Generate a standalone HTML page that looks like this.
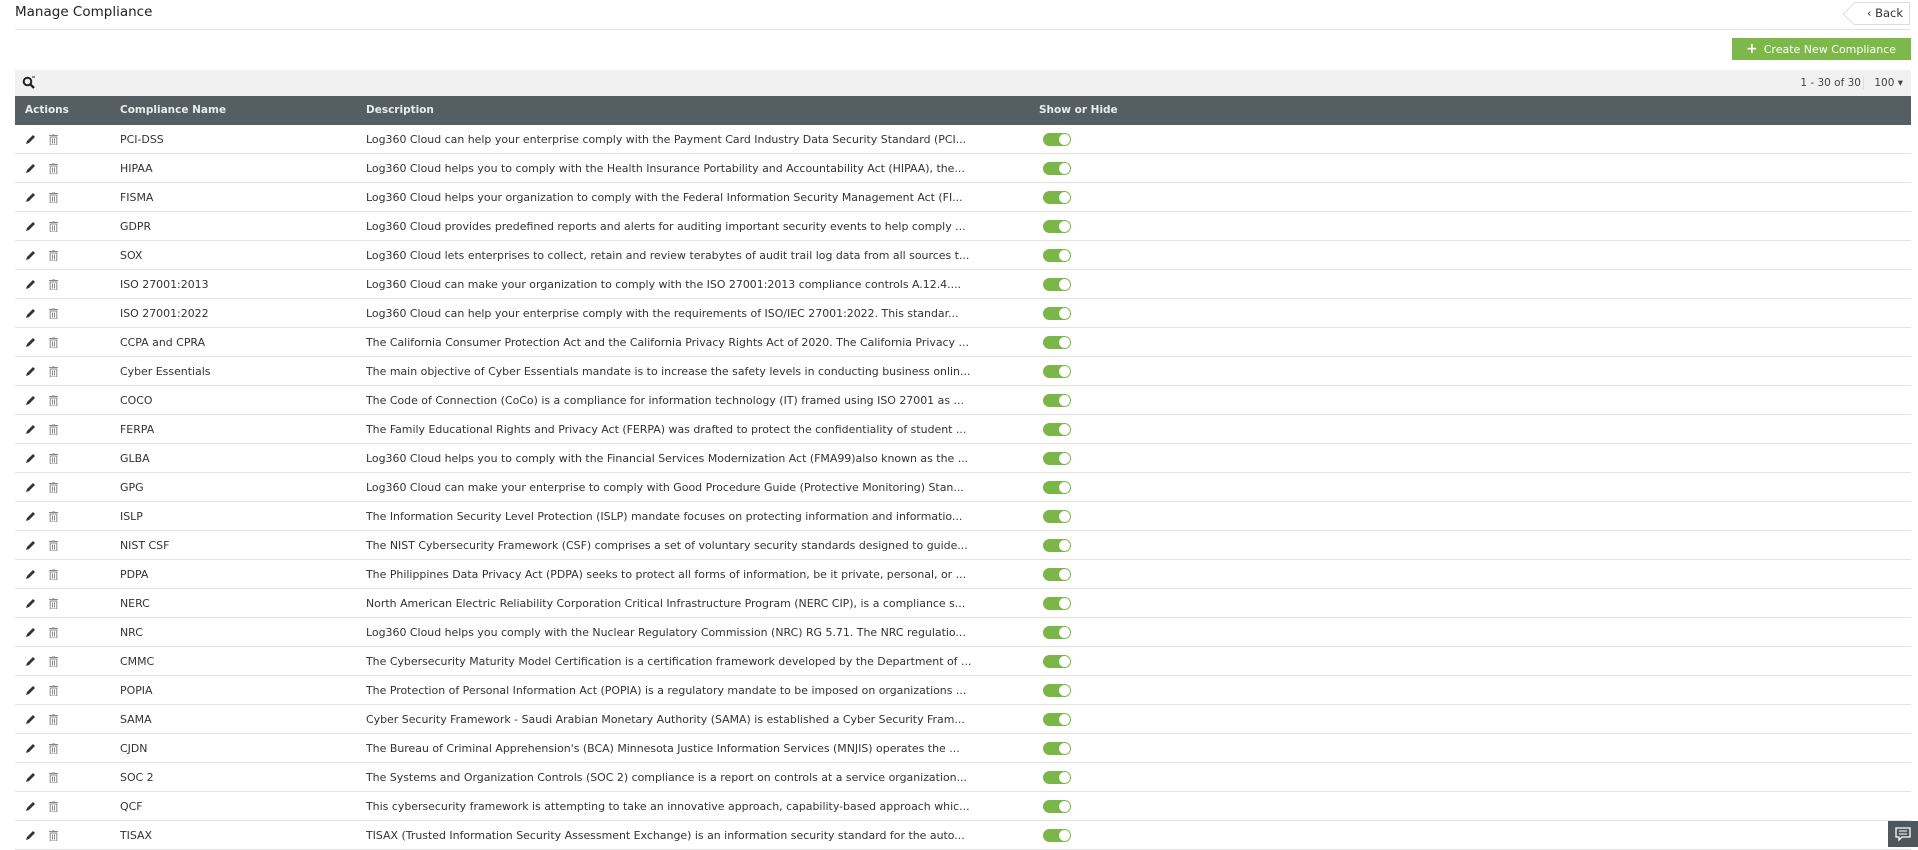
<!DOCTYPE html>
<html><head><meta charset="utf-8"><style>
*{box-sizing:border-box;margin:0;padding:0}
body{width:1918px;height:847px;overflow:hidden;background:#fff;font-family:"DejaVu Sans","Liberation Sans",sans-serif;color:#333;position:relative}
.title{position:absolute;left:15px;top:4px;font-size:13.5px;color:#222}
.hr{position:absolute;left:15px;right:8px;top:29px;height:1px;background:#e3e3e3}
.back{position:absolute;right:8px;top:2px;width:56px;height:23px;border:1px solid #ddd;border-left:none;font-size:11.5px;line-height:21px;text-align:right;padding-right:6px;background:#fff}
.back:before{content:"";position:absolute;left:-8px;top:3px;width:15px;height:15px;border-left:1px solid #ddd;border-bottom:1px solid #ddd;transform:rotate(45deg);background:#fff}
.back span{position:relative}
.btn{position:absolute;left:1732px;top:38px;width:179px;height:22px;background:#7cb94a;color:#fff;font-size:11px;line-height:22px;padding-left:14px}
.btn b{font-size:14px;margin-right:6px}
.bar{position:absolute;left:15px;width:1896px;top:70px;height:26px;background:#f1f1f1}
.pg{position:absolute;right:50px;top:7px;font-size:10.5px;color:#444}
.pp{position:absolute;right:8px;top:7px;font-size:10.5px;color:#444;border-left:1px solid #ddd;padding-left:10px}
.thead{position:absolute;left:15px;width:1896px;top:96px;height:29px;background:#545e63;color:#e8ecee;font-size:10.5px;font-weight:bold}
.thead div,.row div{position:absolute;top:0;line-height:29px;white-space:nowrap}
.row{position:absolute;left:15px;width:1896px;height:29px;border-bottom:1px solid #e3e3e3;font-size:10.95px;color:#333}
.c1{left:10px}.c2{left:105px}.c3{left:351px;width:640px;overflow:hidden}.c4{left:1024px}
.tg{position:absolute;left:1028px;top:8px;width:28px;height:13px;border-radius:7px;background:#7ab648}
.tg:after{content:"";position:absolute;right:1px;top:1px;width:11px;height:11px;border-radius:50%;background:#fff}
.chat{position:absolute;left:1888px;top:821px;width:30px;height:26px;background:#4e575c}
</style></head><body>
<div class="title">Manage Compliance</div>
<div class="back"><span>‹ Back</span></div>
<div class="hr"></div>
<div class="btn"><b>+</b>Create New Compliance</div>
<div class="bar"><svg style="position:absolute;left:7px;top:6px" width="14" height="14" viewBox="0 0 14 14"><circle cx="5.5" cy="5.5" r="3.8" fill="none" stroke="#222" stroke-width="2"/><path d="M8.3 8.3L12 12" stroke="#222" stroke-width="2.4"/><path d="M10 1h3" stroke="#222" stroke-width="1"/></svg><div class="pg">1 - 30 of 30</div><div class="pp">100 ▾</div></div>
<div class="thead"><div class="c1">Actions</div><div class="c2">Compliance Name</div><div class="c3">Description</div><div class="c4">Show or Hide</div></div>
<div id="rows"></div>
<script>
const d=[["PCI-DSS","Log360 Cloud can help your enterprise comply with the Payment Card Industry Data Security Standard (PCI..."],
["HIPAA","Log360 Cloud helps you to comply with the Health Insurance Portability and Accountability Act (HIPAA), the..."],
["FISMA","Log360 Cloud helps your organization to comply with the Federal Information Security Management Act (FI..."],
["GDPR","Log360 Cloud provides predefined reports and alerts for auditing important security events to help comply ..."],
["SOX","Log360 Cloud lets enterprises to collect, retain and review terabytes of audit trail log data from all sources t..."],
["ISO 27001:2013","Log360 Cloud can make your organization to comply with the ISO 27001:2013 compliance controls A.12.4...."],
["ISO 27001:2022","Log360 Cloud can help your enterprise comply with the requirements of ISO/IEC 27001:2022. This standar..."],
["CCPA and CPRA","The California Consumer Protection Act and the California Privacy Rights Act of 2020. The California Privacy ..."],
["Cyber Essentials","The main objective of Cyber Essentials mandate is to increase the safety levels in conducting business onlin..."],
["COCO","The Code of Connection (CoCo) is a compliance for information technology (IT) framed using ISO 27001 as ..."],
["FERPA","The Family Educational Rights and Privacy Act (FERPA) was drafted to protect the confidentiality of student ..."],
["GLBA","Log360 Cloud helps you to comply with the Financial Services Modernization Act (FMA99)also known as the ..."],
["GPG","Log360 Cloud can make your enterprise to comply with Good Procedure Guide (Protective Monitoring) Stan..."],
["ISLP","The Information Security Level Protection (ISLP) mandate focuses on protecting information and informatio..."],
["NIST CSF","The NIST Cybersecurity Framework (CSF) comprises a set of voluntary security standards designed to guide..."],
["PDPA","The Philippines Data Privacy Act (PDPA) seeks to protect all forms of information, be it private, personal, or ..."],
["NERC","North American Electric Reliability Corporation Critical Infrastructure Program (NERC CIP), is a compliance s..."],
["NRC","Log360 Cloud helps you comply with the Nuclear Regulatory Commission (NRC) RG 5.71. The NRC regulatio..."],
["CMMC","The Cybersecurity Maturity Model Certification is a certification framework developed by the Department of ..."],
["POPIA","The Protection of Personal Information Act (POPIA) is a regulatory mandate to be imposed on organizations ..."],
["SAMA","Cyber Security Framework - Saudi Arabian Monetary Authority (SAMA) is established a Cyber Security Fram..."],
["CJDN","The Bureau of Criminal Apprehension's (BCA) Minnesota Justice Information Services (MNJIS) operates the ..."],
["SOC 2","The Systems and Organization Controls (SOC 2) compliance is a report on controls at a service organization..."],
["QCF","This cybersecurity framework is attempting to take an innovative approach, capability-based approach whic..."],
["TISAX","TISAX (Trusted Information Security Assessment Exchange) is an information security standard for the auto..."]];
const pen='<svg style="position:absolute;left:10px;top:9px" width="11" height="11" viewBox="0 0 11 11"><path d="M1 10l1-3 6-6 2 2-6 6z" fill="#333"/></svg>';
const tr='<svg style="position:absolute;left:34px;top:9px" width="9" height="11" viewBox="0 0 9 11"><path d="M0 1.5h9M3 0h3M1.2 3h6.6v8H1.2z" fill="none" stroke="#888" stroke-width="1"/><path d="M3.5 4.5v5M5.5 4.5v5" stroke="#888"/></svg>';
let h='';d.forEach((r,i)=>{h+=`<div class="row" style="top:${125+i*29}px">${pen}${tr}<div class="c2">${r[0]}</div><div class="c3">${r[1]}</div><span class="tg"></span></div>`});
document.getElementById('rows').innerHTML=h;
</script>
<div class="chat"><svg style="position:absolute;left:7px;top:6px" width="16" height="15" viewBox="0 0 16 15"><path d="M1 1h14v9H7l-3 3v-3H1z" fill="none" stroke="#fff" stroke-width="1.3"/><path d="M4 4h8M4 7h8" stroke="#fff"/></svg></div>
</body></html>
